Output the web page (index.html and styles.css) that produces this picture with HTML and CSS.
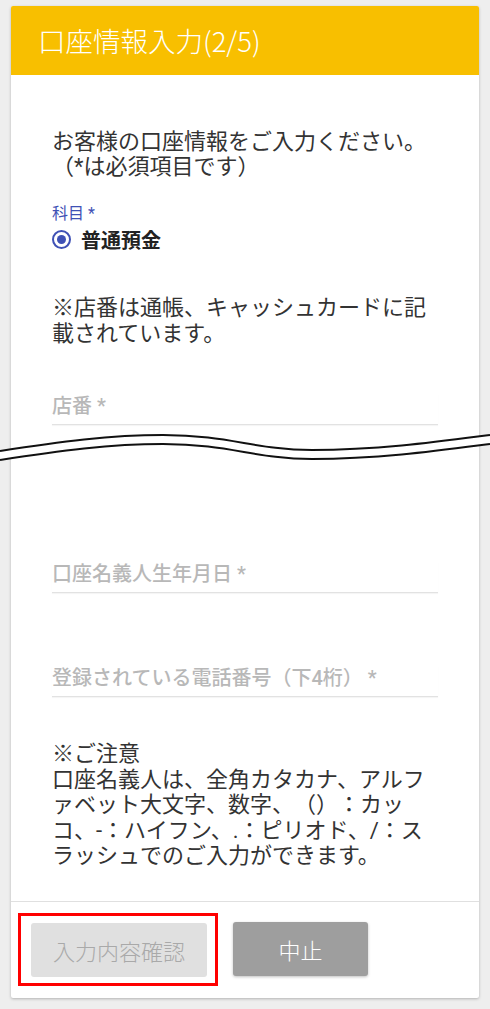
FILE: index.html
```html
<!DOCTYPE html>
<html>
<head>
  <meta charset="utf-8">
  <title>口座情報入力</title>
  <link rel="stylesheet" href="styles.css">
</head>
<body>
  <div class="card">
    <div class="card-header">口座情報入力(2/5)</div>

    <div class="card-body">
      <p class="intro">お客様の口座情報をご入力ください。<br>（*は必須項目です）</p>

      <div class="group-label">科目 *</div>
      <label class="radio">
        <span class="radio-mark"></span>
        <span class="radio-text">普通預金</span>
      </label>

      <p class="note note-branch">※店番は通帳、キャッシュカードに記載されています。</p>

      <div class="field field-branch"><span class="field-label">店番 *</span></div>

      <!-- screenshot cut mark -->
      <div class="cut">
        <svg width="490" height="36" viewBox="0 0 490 36">
          <path d="M0 26.5 C60 17 110 10.5 163 10.5 C230 10.5 255 25.5 312 25.5 C380 25.5 440 17 490 10.5" fill="none" stroke="#fff" stroke-width="9"/>
          <path d="M0 22 C60 12.5 110 6 163 6 C230 6 255 21 312 21 C380 21 440 12.5 490 6" fill="none" stroke="#111" stroke-width="2"/>
          <path d="M0 31 C60 21.5 110 15 163 15 C230 15 255 30 312 30 C380 30 440 21.5 490 15" fill="none" stroke="#111" stroke-width="2"/>
        </svg>
      </div>

      <div class="field field-birth"><span class="field-label">口座名義人生年月日 *</span></div>
      <div class="field field-tel"><span class="field-label">登録されている電話番号（下4桁） *</span></div>

      <p class="note note-caution">※ご注意<br>口座名義人は、全角カタカナ、アルファベット大文字、数字、（）：カッコ、-：ハイフン、.：ピリオド、/：スラッシュでのご入力ができます。</p>
    </div>

    <div class="card-actions">
      <div class="highlight">
        <button class="btn btn-confirm" disabled>入力内容確認</button>
      </div>
      <button class="btn btn-cancel">中止</button>
    </div>
  </div>
</body>
</html>
```

FILE: styles.css
```css
body { margin: 0; padding: 6px 11px 12px; background: #eeeeee; font-family: Roboto, "Noto Sans CJK JP", sans-serif; color: #333; text-spacing-trim: space-all; }
.card { background: #fff; border-radius: 2px; box-shadow: 0 1px 3px rgba(0, 0, 0, 0.25); }
.card-header { height: 69px; line-height: 69px; padding-left: 27px; background: #f8bf00; color: #fff; font-family: "Noto Sans CJK JP", sans-serif; font-size: 27.5px; font-weight: 300; border-radius: 2px 2px 0 0; }
.card-body { padding: 0 41px 32px; }

.intro { margin: 54px 0 0; font-size: 22px; line-height: 25px; }
.group-label { margin-top: 25px; font-size: 16px; line-height: 20px; color: #3f51b5; }
.radio { display: flex; align-items: center; height: 24px; margin-top: 3px; }
.radio-mark { width: 15px; height: 15px; border: 2.5px solid #3f51b5; border-radius: 50%; position: relative; }
.radio-mark::after { content: ""; position: absolute; left: 3px; top: 3px; width: 9px; height: 9px; border-radius: 50%; background: #3f51b5; }
.radio-text { margin-left: 10px; font-size: 20px; font-weight: bold; color: #222; }

.note { margin: 0; font-size: 22px; line-height: 26px; }
.note-branch { margin-top: 44px; }
.note-caution { margin-top: 44px; line-height: 25.5px; }

.field { padding-bottom: 6px; border-bottom: 1px solid #e2e2e2; box-shadow: 0 1px 1px rgba(0, 0, 0, 0.04); }
.field-label { display: block; font-size: 20px; line-height: 24px; color: #b8b8b8; font-weight: 500; }
.field-branch { margin-top: 47px; }
.field-birth { margin-top: 97px; }
.field-tel { margin-top: 73px; }

.cut { margin: 4px -52px 0; height: 36px; }
.cut svg { display: block; }

.card-actions { display: flex; align-items: center; gap: 15px; padding: 11px 7px 12px; border-top: 1px solid #e0e0e0; }
.highlight { border: 3px solid #ff0000; padding: 7px 8px 6px 10px; }
.btn { height: 54px; border: none; border-radius: 3px; font-family: "Noto Sans CJK JP", sans-serif; font-size: 22px; font-weight: 300; cursor: pointer; }
.btn-confirm { display: block; width: 176px; background: #e0e0e0; color: #a9a9a9; }
.btn-cancel { width: 135px; background: #9e9e9e; color: #fff; box-shadow: 0 1px 3px rgba(0, 0, 0, 0.25); }
```
